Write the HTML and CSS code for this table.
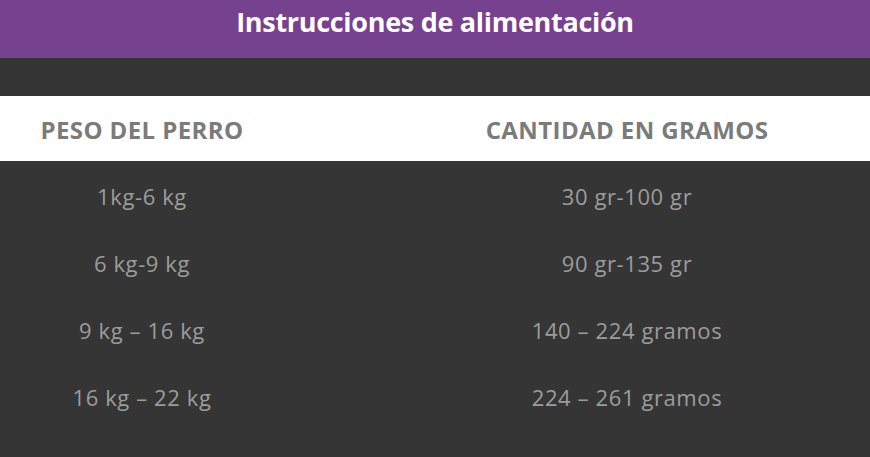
FILE: index.html
```html
<!DOCTYPE html>
<html lang="es">
<head>
<meta charset="utf-8">
<link rel="stylesheet" href="styles.css">
</head>
<body>
<header class="banner"><h1 class="title">Instrucciones de alimentación</h1></header>
<main class="panel">
  <div class="table">
    <div class="row head"><div class="c1">PESO DEL PERRO</div><div class="c2">CANTIDAD EN GRAMOS</div></div>
    <div class="row"><div class="c1">1kg-6 kg</div><div class="c2">30 gr-100 gr</div></div>
    <div class="row"><div class="c1">6 kg-9 kg</div><div class="c2">90 gr-135 gr</div></div>
    <div class="row"><div class="c1">9 kg – 16 kg</div><div class="c2">140 – 224 gramos</div></div>
    <div class="row"><div class="c1">16 kg – 22 kg</div><div class="c2">224 – 261 gramos</div></div>
  </div>
</main>
</body>
</html>
```
FILE: styles.css
```css
html, body { margin: 0; padding: 0; }
body {
  width: 870px; height: 457px; overflow: hidden;
  background: #353535;
  font-family: "Open Sans", "Noto Sans", sans-serif;
}
.banner {
  height: 58px;
  background: #76428f;
  display: flex; justify-content: center;
}
.title {
  margin: 0; padding-top: 3px;
  color: #fff; font-size: 27px; font-weight: 700;
  line-height: 37px; letter-spacing: -0.3px;
}
.panel { padding-top: 38px; }
.row {
  display: grid; grid-template-columns: 284px 1fr;
  height: 67px; align-items: center; padding-top: 3px; box-sizing: border-box;
  color: #9c9c9c; font-size: 22px; letter-spacing: 0.6px;
}
.row .c1, .row .c2 { text-align: center; }
.row .c2 { padding-left: 100px; }
.row.head {
  height: 65px; background: #fff; padding-top: 1px;
  color: #7b7b7b; font-weight: 700; font-size: 24px; letter-spacing: 0.4px;
}
```
